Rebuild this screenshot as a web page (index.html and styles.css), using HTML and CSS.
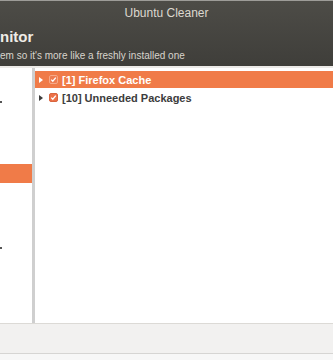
FILE: index.html
```html
<!DOCTYPE html>
<html lang="en">

<head>
    <meta charset="UTF-8">
    <meta name="viewport" content="width=device-width, initial-scale=1.0">
    <title>Ubuntu Cleaner</title>
    <link rel="stylesheet" href="styles.css">
</head>

<body>
    <div class="window">
        <div class="titlebar">
            <div class="title">Ubuntu Cleaner</div>
            <div class="header">
                <h1>nitor</h1>
                <p>em so it's more like a freshly installed one</p>
            </div>
        </div>
        <div class="panes">
            <div class="sidebar">
                <div class="side-item"><span class="mark"></span></div>
                <div class="side-item selected"></div>
                <div class="side-item last"><span class="mark"></span></div>
            </div>
            <div class="tree">
                <div class="row selected">
                    <svg class="expander" width="6" height="8" viewBox="0 0 6 8">
                        <path d="M1 1l4 3-4 3z" fill="currentColor" />
                    </svg>
                    <svg class="check" width="9" height="9" viewBox="0 0 9 9">
                        <rect x=".5" y=".5" width="8" height="8" rx="1.5" fill="#ee7c50" stroke="#f6a988" />
                        <path d="M2.2 4.6l1.6 1.6 3-3.6" fill="none" stroke="#fff" stroke-width="1.3" />
                    </svg>
                    <span class="label">[1] Firefox Cache</span>
                </div>
                <div class="row">
                    <svg class="expander" width="6" height="8" viewBox="0 0 6 8">
                        <path d="M1 1l4 3-4 3z" fill="currentColor" />
                    </svg>
                    <svg class="check" width="9" height="9" viewBox="0 0 9 9">
                        <rect x=".5" y=".5" width="8" height="8" rx="1.5" fill="#ec7148" stroke="#d8653f" />
                        <path d="M2.2 4.6l1.6 1.6 3-3.6" fill="none" stroke="#fff" stroke-width="1.3" />
                    </svg>
                    <span class="label">[10] Unneeded Packages</span>
                </div>
            </div>
        </div>
        <div class="statusbar"></div>
        <div class="bottom"></div>
    </div>
</body>

</html>
```

FILE: styles.css
```css
body {
    margin: 0;
    height: 360px;
    overflow: hidden;
    background-color: #fff;
    font-family: "Liberation Sans", "DejaVu Sans", sans-serif;
}

.window {
    display: flex;
    flex-direction: column;
    height: 360px;
}

.titlebar {
    height: 65px;
    flex: none;
    border-top: 1px solid #9d9c98;
    background: linear-gradient(#4d4c47, #3f3e3a);
    color: #dfdbd2;
    display: flex;
    flex-direction: column;
}

.title {
    text-align: center;
    font-size: 12px;
    line-height: 12px;
    padding-top: 6px;
    color: #dcd8cf;
}

.header {
    padding-top: 11px;
}

.header h1 {
    margin: 0;
    font-size: 15px;
    line-height: 14px;
    font-weight: bold;
    color: #efece6;
}

.header p {
    margin: 6px 0 0;
    font-size: 10px;
    line-height: 12px;
    color: #d8d4cc;
}

.panes {
    flex: 1;
    display: flex;
    border-top: 2px solid #eceae7;
}

.sidebar {
    width: 32px;
    border-right: 3px solid #cfcfcf;
    background-color: #fff;
    display: flex;
    flex-direction: column;
}

.side-item {
    height: 19px;
    position: relative;
}

.side-item:first-child {
    margin-top: 25px;
}

.side-item.selected {
    margin-top: 52px;
    background-color: #f07b48;
}

.side-item.last {
    margin-top: 56px;
}

.mark {
    position: absolute;
    left: 0;
    top: 8px;
    width: 2px;
    height: 2px;
    background-color: #555;
}

.tree {
    flex: 1;
    background-color: #fff;
    padding-top: 3px;
}

.row {
    height: 17px;
    display: flex;
    align-items: center;
    padding-left: 3px;
    margin-bottom: 1px;
    color: #3c3c3c;
}

.row.selected {
    background-color: #f07b48;
    color: #fff;
}

.expander {
    margin-right: 5px;
}

.check {
    margin-right: 4px;
}

.label {
    font-size: 11px;
    font-weight: bold;
}

.statusbar {
    height: 29px;
    flex: none;
    border-top: 1px solid #dcdad6;
    background-color: #f2f1f0;
}

.bottom {
    height: 6px;
    flex: none;
    border-top: 1px solid #d6d5d3;
    background-color: #f7f7f7;
}
```
